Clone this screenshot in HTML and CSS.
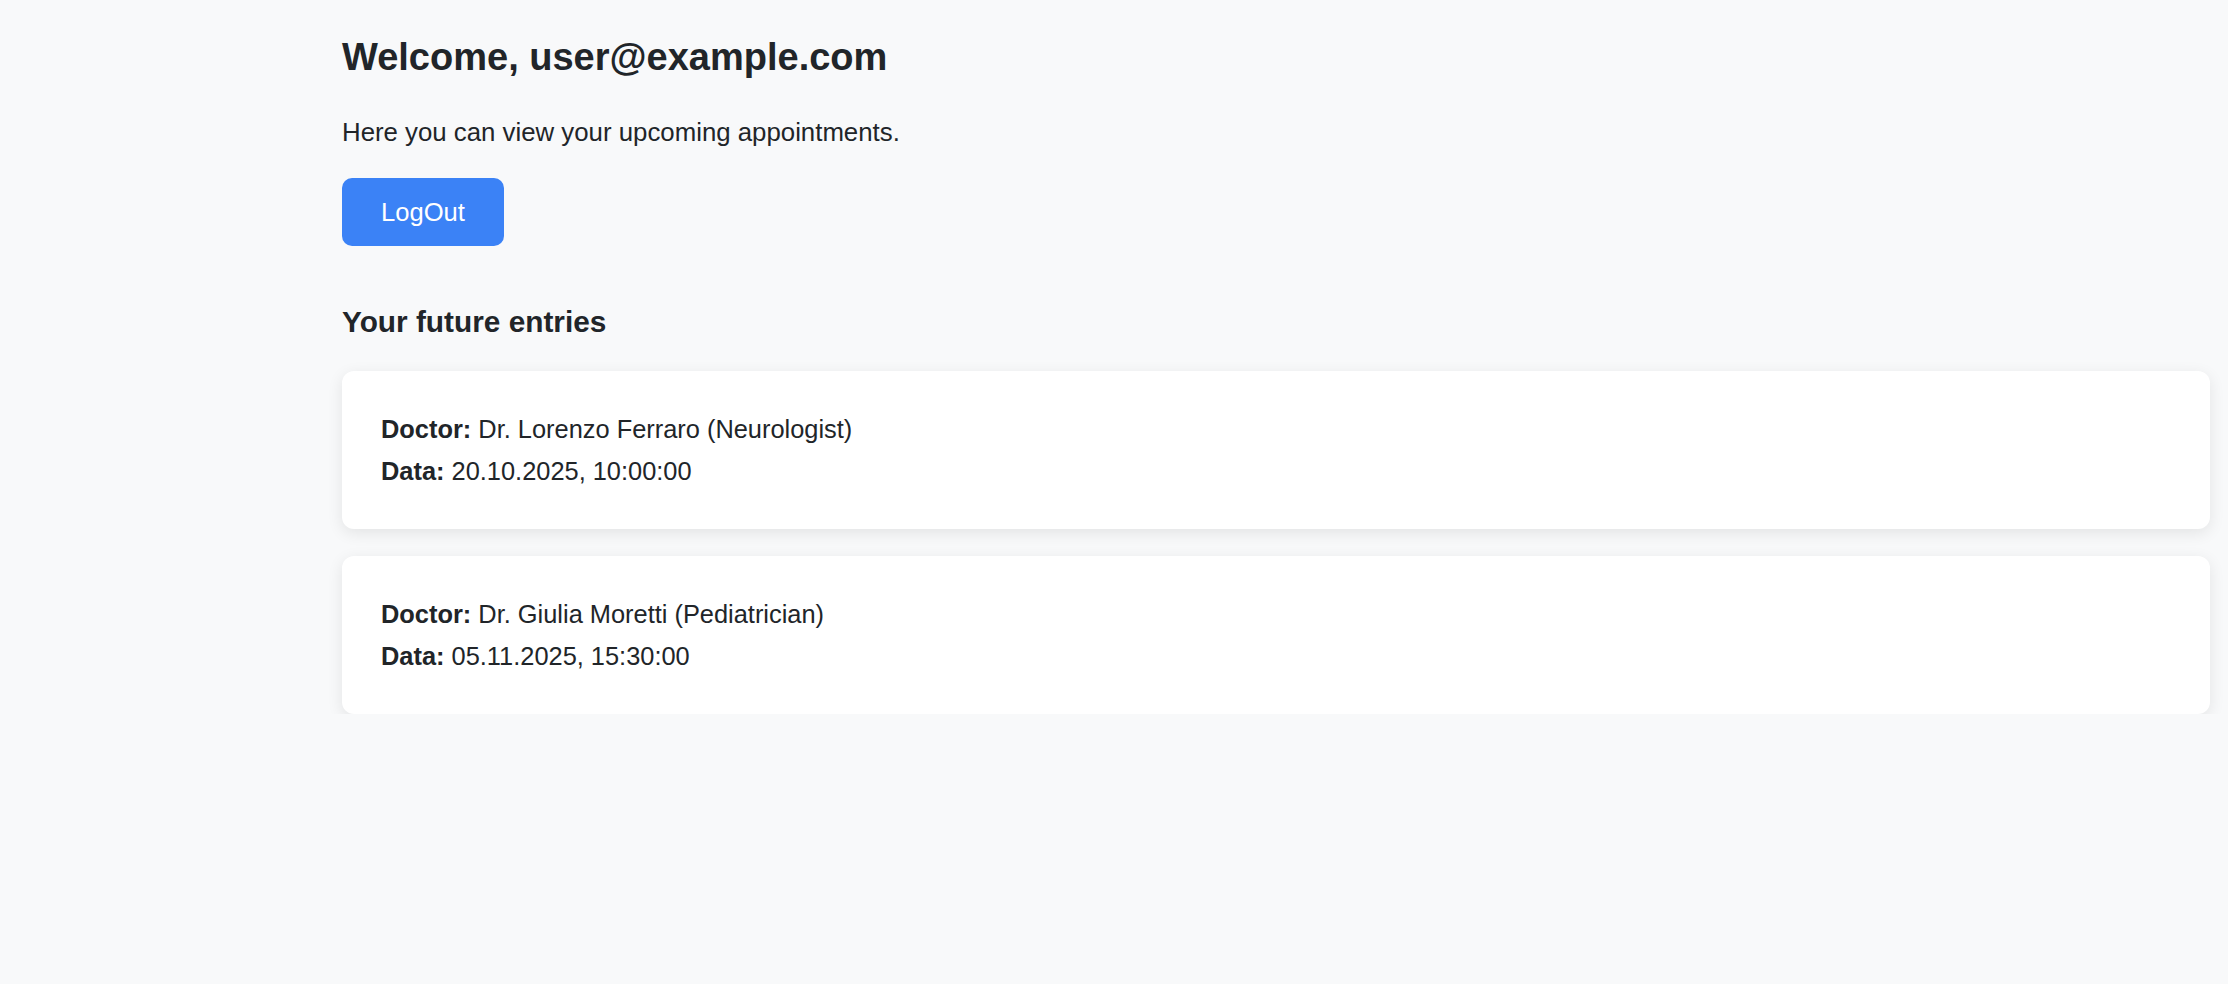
FILE: index.html
```html
<!DOCTYPE html>
<html lang="en">
<head>
<meta charset="utf-8">
<title>Appointments</title>
<link rel="stylesheet" href="styles.css">
</head>
<body>
  <main class="page">
    <h2 class="title">Welcome, user@example.com</h2>
    <p class="intro">Here you can view your upcoming appointments.</p>
    <button class="btn-logout" type="button">LogOut</button>
    <h3 class="section-title">Your future entries</h3>
    <div class="entries">
      <div class="card">
        <div class="line"><strong>Doctor:</strong> Dr. Lorenzo Ferraro (Neurologist)</div>
        <div class="line"><strong>Data:</strong> 20.10.2025, 10:00:00</div>
      </div>
      <div class="card">
        <div class="line"><strong>Doctor:</strong> Dr. Giulia Moretti (Pediatrician)</div>
        <div class="line"><strong>Data:</strong> 05.11.2025, 15:30:00</div>
      </div>
    </div>
  </main>
</body>
</html>
```

FILE: styles.css
```css
html, body {
  margin: 0;
  padding: 0;
  background: #f8f9fa;
}

.page {
  padding: 35px 18px 0 342px;
  font-family: "Liberation Sans", Arial, Helvetica, sans-serif;
  color: #212529;
}

.title {
  margin: 0;
  font-size: 38px;
  line-height: 44px;
  font-weight: 700;
}

.intro {
  margin: 38px 0 0;
  font-size: 25.8px;
  line-height: 30px;
}

.btn-logout {
  display: block;
  margin-top: 31px;
  height: 68px;
  padding: 0 39px;
  border: none;
  border-radius: 10px;
  background: #3b82f6;
  color: #ffffff;
  font-family: "Liberation Sans", Arial, Helvetica, sans-serif;
  font-size: 25.6px;
  line-height: 68px;
  cursor: pointer;
}

.section-title {
  margin: 59px 0 0;
  font-size: 29.8px;
  line-height: 34px;
  font-weight: 700;
}

.entries {
  margin-top: 32px;
  display: flex;
  flex-direction: column;
  gap: 27px;
}

.card {
  background: #ffffff;
  border-radius: 12px;
  padding: 37px 39px 37px;
  box-shadow: 0 4px 16px rgba(0, 0, 0, 0.09);
}

.line {
  font-size: 25.4px;
  line-height: 42px;
}

.line strong {
  font-weight: 700;
}
```
